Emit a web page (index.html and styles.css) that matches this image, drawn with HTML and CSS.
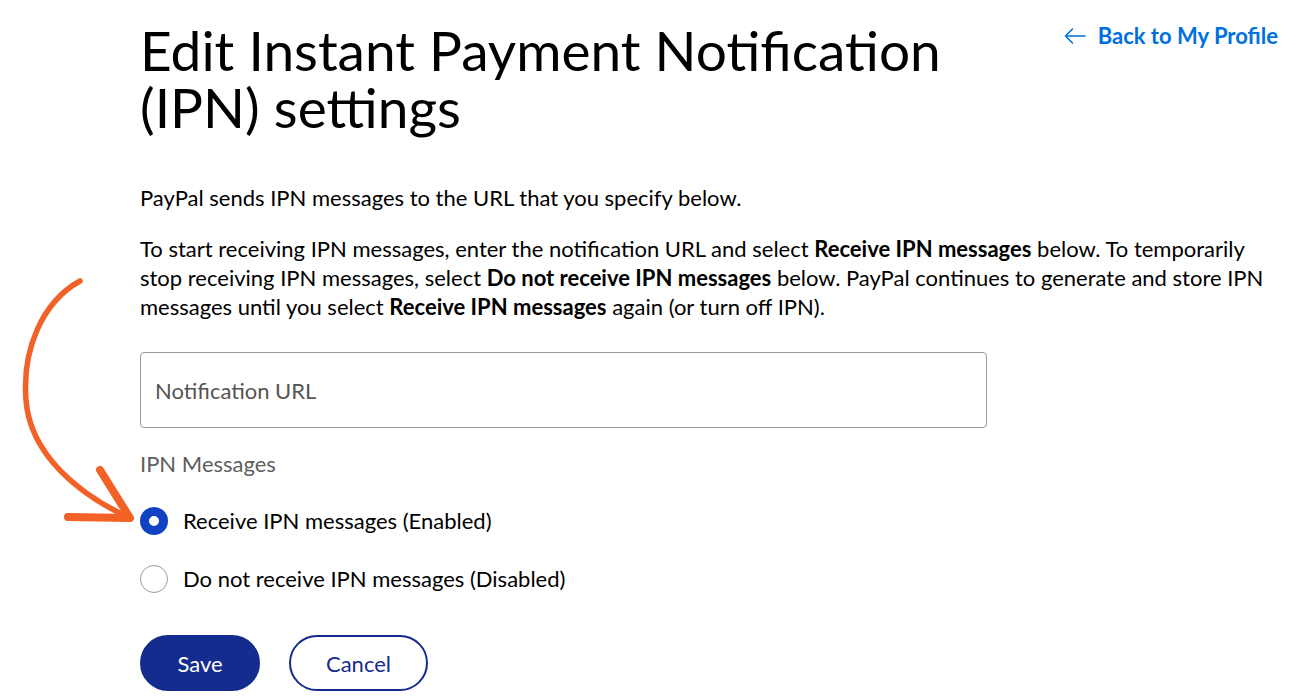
FILE: index.html
```html
<!DOCTYPE html>
<html lang="en">
<head>
<meta charset="utf-8">
<title>Edit Instant Payment Notification (IPN) settings</title>
<link rel="stylesheet" href="styles.css">
</head>
<body>
<div class="page">
  <header class="header">
    <h1 class="title">Edit Instant Payment Notification (IPN) settings</h1>
    <a class="back" href="#">
      <svg class="back-icon" width="22" height="16" viewBox="0 0 22 16" aria-hidden="true">
        <path d="M21 8H1.5M8.5 1L1.5 8l7 7" fill="none" stroke="#0070e0" stroke-width="1.6" stroke-linecap="round" stroke-linejoin="round"/>
      </svg>
      <span>Back to My Profile</span>
    </a>
  </header>

  <p class="intro">PayPal sends IPN messages to the URL that you specify below.</p>
  <p class="desc">To start receiving IPN messages, enter the notification URL and select <b>Receive IPN messages</b> below. To temporarily stop receiving IPN messages, select <b>Do not receive IPN messages</b> below. PayPal continues to generate and store IPN messages until you select <b>Receive IPN messages</b> again (or turn off IPN).</p>

  <div class="field">
    <input class="url-input" type="text" placeholder="Notification URL">
  </div>

  <div class="group-label">IPN Messages</div>

  <div class="options">
    <label class="option">
      <span class="radio checked"></span>
      <span>Receive IPN messages (Enabled)</span>
    </label>
    <label class="option">
      <span class="radio"></span>
      <span>Do not receive IPN messages (Disabled)</span>
    </label>
  </div>

  <div class="actions">
    <button class="btn btn-primary">Save</button>
    <button class="btn btn-secondary">Cancel</button>
  </div>

  <svg class="annotation" width="140" height="260" viewBox="0 0 140 260" aria-hidden="true">
    <path d="M60 11 C 22 32, 2 80, 6 130 C 10 185, 60 225, 108 247" fill="none" stroke="#f26125" stroke-width="5.5" stroke-linecap="round"/>
    <path d="M80 200 L110 248 L48 247" fill="none" stroke="#f26125" stroke-width="8" stroke-linecap="round" stroke-linejoin="round"/>
  </svg>
</div>
</body>
</html>
```
FILE: styles.css
```css
* { box-sizing: border-box; }

html, body {
  margin: 0;
  padding: 0;
  background: #ffffff;
}

body {
  font-family: Lato, "Open Sans", "Noto Sans", sans-serif;
  color: #000000;
}

.page {
  position: relative;
  padding: 0 22px 0 140px;
  height: 700px;
  overflow: hidden;
}

.header {
  display: flex;
  justify-content: space-between;
  align-items: flex-start;
}

.title {
  margin: 22px 0 0 0;
  width: 880px;
  font-size: 55px;
  line-height: 57px;
  font-weight: 400;
  color: #000;
}

.back {
  display: flex;
  align-items: center;
  gap: 12px;
  margin-top: 22px;
  color: #0070e0;
  text-decoration: none;
  font-size: 22px;
  font-weight: 700;
}

.back-icon { display: block; }

.intro {
  margin: 47px 0 0 0;
  font-size: 22px;
  line-height: 29px;
}

.desc {
  margin: 22px 0 0 0;
  width: 1130px;
  font-size: 22px;
  line-height: 29px;
}

.desc b { font-weight: 700; }

.field {
  margin-top: 31px;
  width: 847px;
}

.url-input {
  display: block;
  width: 100%;
  height: 76px;
  border: 1px solid #999999;
  border-radius: 4px;
  padding: 0 14px;
  font-family: inherit;
  font-size: 22px;
  color: #000;
  outline: none;
}

.url-input::placeholder { color: #545454; }

.group-label {
  margin-top: 23px;
  font-size: 22px;
  line-height: 26px;
  color: #5e5e5e;
}

.options {
  display: flex;
  flex-direction: column;
  gap: 30px;
  margin-top: 30px;
}

.option {
  display: flex;
  align-items: center;
  gap: 15px;
  font-size: 22px;
  line-height: 28px;
  color: #000;
}

.radio {
  width: 28px;
  height: 28px;
  border-radius: 50%;
  border: 1px solid #9a9a9a;
  background: #fff;
  flex: none;
}

.radio.checked {
  border: 9px solid #1142c3;
}

.actions {
  display: flex;
  gap: 29px;
  margin-top: 42px;
}

.btn {
  height: 56px;
  border-radius: 28px;
  font-family: inherit;
  font-size: 22px;
  font-weight: 400;
  padding: 0;
  cursor: pointer;
}

.btn-primary {
  width: 120px;
  background: #142c8e;
  border: 2px solid #142c8e;
  color: #fff;
}

.btn-secondary {
  width: 139px;
  background: #fff;
  border: 2px solid #142c8e;
  color: #142c8e;
}

.annotation {
  position: absolute;
  left: 20px;
  top: 270px;
}
```
